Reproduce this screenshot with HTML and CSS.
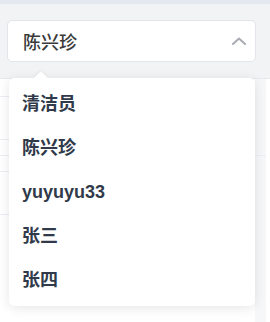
FILE: index.html
```html
<!DOCTYPE html>
<html lang="zh-CN">
  <head>
    <meta charset="UTF-8" />
    <meta name="viewport" content="width=device-width, initial-scale=1.0" />
    <title>选择人员</title>
    <link rel="stylesheet" href="styles.css">
  </head>

  <body>
    <div class="topbar"></div>

    <div class="filter">
      <div class="select">
        <span class="select-text">陈兴珍</span>
        <svg class="chevron" width="14" height="8" viewBox="0 0 14 8">
          <path d="M1 7 L7 1.5 L13 7" fill="none" stroke="#a8abb2" stroke-width="2" stroke-linecap="round" stroke-linejoin="round" />
        </svg>
      </div>
    </div>

    <div class="content">
      <div class="table">
        <div class="col-main">
          <div class="row" style="height: 18px"></div>
          <div class="row" style="height: 43px"></div>
          <div class="row" style="height: 16px"></div>
          <div class="row" style="height: 16px"></div>
          <div class="row" style="height: 43px"></div>
        </div>
        <div class="col-side">
          <div class="row" style="height: 77px"></div>
        </div>
        <div class="col-end"></div>
      </div>

      <div class="dropdown">
        <div class="arrow"></div>
        <ul class="options">
          <li class="option">清洁员</li>
          <li class="option">陈兴珍</li>
          <li class="option">yuyuyu33</li>
          <li class="option">张三</li>
          <li class="option">张四</li>
        </ul>
      </div>
    </div>
  </body>
</html>
```

FILE: styles.css
```css
html, body {
  margin: 0;
  padding: 0;
}

body {
  width: 270px;
  height: 322px;
  overflow: hidden;
  background-color: #ffffff;
  font-family: "Liberation Sans", "Noto Sans CJK SC", sans-serif;
}

.topbar {
  height: 4px;
  background-color: #e4e9f1;
}

.filter {
  background-color: #f2f3f5;
  padding: 16px 14px 16px 7px;
}

.select {
  height: 40px;
  display: flex;
  align-items: center;
  justify-content: space-between;
  padding: 0 8px 0 15px;
  background-color: #ffffff;
  border: 1px solid #e2e5ea;
  border-radius: 5px;
}

.select-text {
  font-size: 18px;
  font-weight: 500;
  color: #3a3a3a;
}

.chevron {
  margin-right: 1px;
}

.content {
  position: relative;
  height: 244px;
  border-top: 1px solid #e6e8ec;
  box-sizing: border-box;
}

.table {
  display: flex;
  height: 100%;
}

.col-main {
  width: 255px;
}

.col-side {
  width: 11px;
  background-color: #f6f7f9;
}

.col-end {
  flex: 1;
}

.row {
  border-bottom: 1px solid #ebeef2;
  box-sizing: border-box;
}

.dropdown {
  position: absolute;
  top: -1px;
  left: 9px;
  width: 246px;
  background-color: #ffffff;
  border-radius: 6px;
  box-shadow: 0 2px 12px rgba(0, 0, 0, 0.1);
}

.arrow {
  position: absolute;
  top: -5px;
  left: 27px;
  width: 10px;
  height: 10px;
  background-color: #ffffff;
  transform: rotate(45deg);
  box-shadow: -1px -1px 2px rgba(0, 0, 0, 0.05);
}

.options {
  position: relative;
  list-style: none;
  margin: 0;
  padding: 4px 0;
  background-color: #ffffff;
  border-radius: 6px;
}

.option {
  height: 44px;
  line-height: 44px;
  padding: 0 13px;
  font-size: 18px;
  font-weight: 700;
  color: #303a4a;
}
```
